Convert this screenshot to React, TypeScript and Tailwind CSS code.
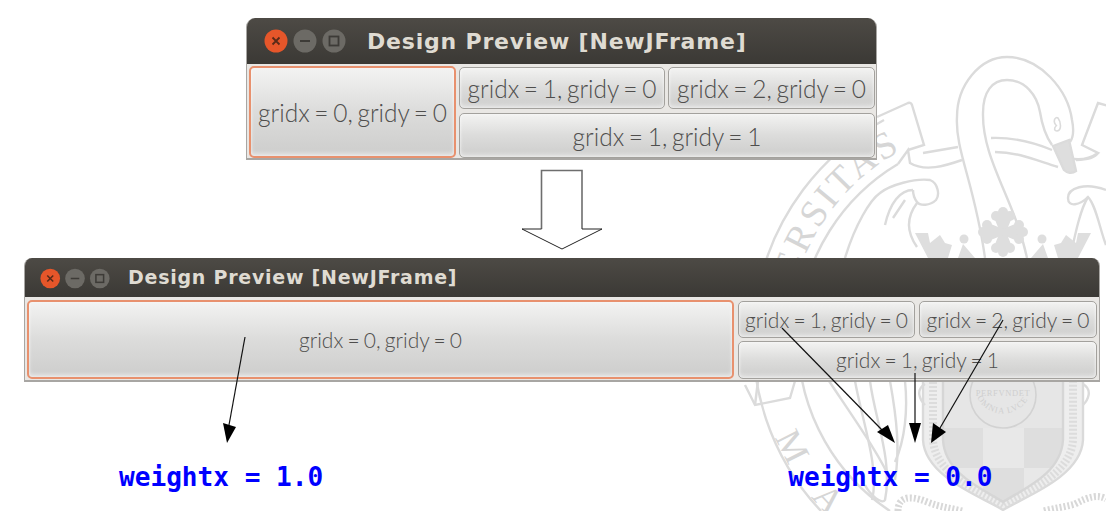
import React from "react";

const Btn = ({ label, big, active, cls }: { label: string; big?: boolean; active?: boolean; cls?: string }) => (
  <div
    className={`flex items-center justify-center bg-gradient-to-b from-[#f3f3f2] via-[#dcdcdb] to-[#cdcdcc] shadow-[inset_0_-3px_4px_rgba(255,255,255,0.45),inset_0_0_3px_rgba(255,255,255,0.6)] whitespace-nowrap font-light text-[#4f4e4d] [font-family:'Lato',sans-serif] ${
      big ? "text-[24.5px] [word-spacing:-2px] pt-[3px]" : "text-[21px] [word-spacing:-1.5px]"
    } ${active ? "border-2 border-[#e8916e] rounded-[5px]" : "border border-[#a3a19d] rounded-[5px]"} ${cls ?? ""}`}
  >
    {label}
  </div>
);

const Dots = ({ big }: { big?: boolean }) => (
  <svg className={big ? "w-[82px] h-[24px] shrink-0" : "w-[70px] h-[21px] shrink-0 mt-[2px]"} viewBox="0 0 82 24">
    <circle cx="12" cy="12" r="11.5" fill="#e6562a" />
    <path d="M8.5 8.5l7 7m0-7l-7 7" stroke="#5a2a18" strokeWidth="1.8" />
    <circle cx="41" cy="12" r="11.5" fill="#6c6a65" />
    <path d="M36 12h10" stroke="#3d3b37" strokeWidth="1.8" />
    <circle cx="70" cy="12" r="11.5" fill="#6c6a65" />
    <rect x="65.5" y="7.5" width="9" height="9" fill="none" stroke="#3d3b37" strokeWidth="1.8" />
  </svg>
);

const CrossArm = ({ angle }: { angle: number }) => (
  <g transform={`translate(1003 232) rotate(${angle})`}>
    <path d="M-3 0L-10 -17H10L3 0Z" />
    <circle cx="0" cy="-20" r="5" />
    <circle cx="-7" cy="-16" r="5" />
    <circle cx="7" cy="-16" r="5" />
  </g>
);

const Watermark = () => (
  <svg className="absolute inset-0" width="1106" height="511" viewBox="0 0 1106 511" fill="none" stroke="#dbdbdb" strokeWidth="2.4">
    <defs>
      <path id="topArc" d="M788 340A215 215 0 0 1 1003 125" />
      <path id="lowArc" d="M755 340A248 248 0 0 0 1003 588" />
      <path id="lvce" d="M975 392A29 29 0 0 0 1031 392" />
      <clipPath id="shieldClip">
        <path d="M943 378V440C945 475 985 490 1003 502C1021 490 1061 475 1063 440V378Z" />
      </clipPath>
    </defs>

    {/* rings */}
    <path d="M821 511A250 250 0 0 1 884 120" />
    <path d="M890 511A205 205 0 0 1 898 164" />

    {/* lettering */}
    <g stroke="none" fill="#d6d6d6" className="[font-family:'Liberation_Serif',serif]">
      <text fontSize="38" letterSpacing="3">
        <textPath href="#topArc" startOffset="31">VERSITAS</textPath>
      </text>
      <text fontSize="36">
        <textPath href="#lowArc" startOffset="100">M</textPath>
      </text>
      <text fontSize="36">
        <textPath href="#lowArc" startOffset="170">A</textPath>
      </text>
    </g>

    {/* ribbons */}
    <path d="M877 117L908 103Q911 102 912 105L924 145L908 150" />
    <path d="M898 164L908 150L910 163C925 172 945 166 962 160" />
    <path d="M923 153L958 147" />
    <path d="M1122 110L1098 103L1082 145L1098 153C1085 162 1070 160 1062 155" />
    <path d="M795 381L790 398L755 405L745 385" />
    <path d="M755 405L758 381" />

    {/* swan */}
    <path d="M957 117C957 85 980 57 1007 57C1040 57 1068 90 1072 120C1074 130 1073 138 1070 142" />
    <path d="M983 113C983 92 992 80 1007 80C1025 80 1037 95 1040 112C1042 125 1045 135 1052 145" />
    <path d="M957 117C955 150 975 185 985 258" />
    <path d="M983 113C982 160 1015 200 1027 258" />
    <path d="M991 138C1015 137 1035 143 1052 150" />
    <path d="M995 152C1020 152 1040 162 1058 167" />
    <path d="M1057 126C1052 122 1055 116 1058 118C1061 122 1062 130 1057 131C1054 131 1054 128 1056 126" strokeWidth="1.6" />
    <path d="M1053 146L1069 140L1076 171C1072 174 1067 173 1064 170Z" fill="#dedede" />
    <path d="M1076 160C1085 160 1095 158 1098 153" />

    {/* scrolls */}
    <path d="M845 258C855 225 870 200 880 193C890 185 915 178 930 180C938 183 940 195 936 200C930 206 920 206 917 202C914 198 913 195 913 190" />
    <path d="M913 190C900 190 890 203 885 225M905 200L893 218" />
    <path d="M917 203C908 215 905 230 917 247" />
    <path d="M1106 190C1085 182 1068 188 1068 198C1068 208 1080 205 1088 197C1096 205 1100 230 1106 245" />
    <path d="M1088 197C1080 210 1075 235 1070 258" />

    {/* crown */}
    <g stroke="none" fill="#dedede">
      <CrossArm angle={0} />
      <CrossArm angle={90} />
      <CrossArm angle={180} />
      <CrossArm angle={270} />
      <path d="M915 233L928 233L930 243L940 235L945 243L952 245L948 258H928Z" />
      <path d="M1091 233L1078 233L1076 243L1066 235L1061 243L1054 245L1058 258H1078Z" />
      <circle cx="964" cy="239" r="4.5" />
      <circle cx="1042" cy="239" r="4.5" />
      <path d="M958 258L963 244L975 258ZM1048 258L1043 244L1031 258Z" />
    </g>

    {/* feathers */}
    <path d="M829 381C855 420 880 455 893 485" />
    <path d="M855 381C862 420 880 470 872 500" />
    <path d="M870 381C875 420 893 460 885 500C882 505 870 495 865 485" />
    <path d="M890 381C897 420 900 450 895 480" />
    <path d="M905 381C908 410 905 440 895 462" />

    {/* shield */}
    <path d="M923 378V440C925 478 985 498 1003 510C1021 498 1081 478 1083 440V378Z" fill="#eeeeee" stroke="#dadada" />
    <g clipPath="url(#shieldClip)" stroke="none">
      <rect x="943" y="378" width="122" height="50" fill="#e6e6e6" />
      <rect x="943" y="428" width="40" height="40" fill="#dedede" />
      <rect x="983" y="428" width="41" height="40" fill="#e8e8e8" />
      <rect x="1024" y="428" width="41" height="40" fill="#dedede" />
      <rect x="943" y="468" width="40" height="40" fill="#e8e8e8" />
      <rect x="983" y="468" width="41" height="40" fill="#dedede" />
      <rect x="1024" y="468" width="41" height="40" fill="#e8e8e8" />
    </g>
    <path d="M933 378V440C935 476 985 494 1003 506C1021 494 1071 476 1073 440V378" strokeWidth="8" strokeDasharray="2 2" stroke="#dcdcdc" />
    <path d="M943 378V440C945 475 985 490 1003 502C1021 490 1061 475 1063 440V378" stroke="#d6d6d6" />
    <circle cx="1003" cy="395" r="33" stroke="#d2d2d2" strokeWidth="1.6" />
    <g stroke="none" fill="#cfcfcf" className="[font-family:'Liberation_Serif',serif]">
      <text x="1003" y="396" fontSize="8.5" letterSpacing="0.6" textAnchor="middle">PERFVNDET</text>
      <text fontSize="8.5" letterSpacing="1">
        <textPath href="#lvce" startOffset="6">OMNIA LVCE</textPath>
      </text>
    </g>
    <path d="M925 384C915 390 920 400 925 405M1083 384C1093 390 1088 400 1083 405" />

    {/* rope */}
    <path d="M898 511C898 498 908 494 927 502C940 507 950 508 962 511M1044 511C1055 508 1065 507 1075 504C1088 497 1098 494 1106 499" strokeWidth="7" strokeDasharray="2 2" stroke="#d8d8d8" />
  </svg>
);

export default function App() {
  return (
    <div className="relative w-[1106px] h-[511px] overflow-hidden bg-white">
      <Watermark />

      <div className="relative flex flex-col">
        {/* first window */}
        <div className="ml-[246px] mt-[18px] w-[631px] h-[142px] flex flex-col rounded-t-[9px] overflow-hidden border-b-2 border-x border-[#a8a6a3] bg-[#e9e7e4]">
          <div className="h-[46px] shrink-0 flex items-center pl-[17px] gap-[21px] bg-gradient-to-b from-[#4d4a45] to-[#3b3935]">
            <Dots big />
            <span className="text-[22px] font-bold tracking-[0.8px] text-[#dfdbd2] [font-family:'DejaVu_Sans',sans-serif] whitespace-nowrap">
              Design Preview [NewJFrame]
            </span>
          </div>
          <div className="flex-1 grid grid-cols-[207px_206px_207px] grid-rows-[42px_45px] gap-x-[3px] gap-y-[4px] pl-[2px] pt-[3px]">
            <Btn big active cls="row-span-2 -mt-[1px]" label="gridx = 0, gridy = 0" />
            <Btn big label="gridx = 1, gridy = 0" />
            <Btn big label="gridx = 2, gridy = 0" />
            <Btn big cls="col-span-2" label="gridx = 1, gridy = 1" />
          </div>
        </div>

        {/* big arrow */}
        <svg className="ml-[521px] mt-[9px] w-[82px] h-[81px]" viewBox="0 0 82 81" fill="none">
          <path d="M20.5 60V1.5H61V60" stroke="#6e6e6e" strokeWidth="1.6" />
          <path d="M20.5 60H1L41 80L81 60H61" stroke="#222" strokeWidth="1" />
        </svg>

        {/* second window */}
        <div className="ml-[24px] mt-[8px] w-[1076px] h-[124px] flex flex-col rounded-t-[8px] overflow-hidden border-b-2 border-x border-[#a8a6a3] bg-[#e9e7e4]">
          <div className="h-[39px] shrink-0 flex items-center pl-[15px] gap-[18px] bg-gradient-to-b from-[#4d4a45] to-[#3b3935]">
            <Dots />
            <span className="text-[19px] font-bold tracking-[0.75px] text-[#dfdbd2] [font-family:'DejaVu_Sans',sans-serif] whitespace-nowrap">
              Design Preview [NewJFrame]
            </span>
          </div>
          <div className="flex-1 grid grid-cols-[707px_177px_178px] grid-rows-[37px_38px] gap-x-[4px] gap-y-[3px] pl-[2px] pt-[4px]">
            <Btn active cls="row-span-2 -mt-[1px]" label="gridx = 0, gridy = 0" />
            <Btn label="gridx = 1, gridy = 0" />
            <Btn label="gridx = 2, gridy = 0" />
            <Btn cls="col-span-2" label="gridx = 1, gridy = 1" />
          </div>
        </div>

        {/* weights */}
        <div className="mt-[78px] ml-[119px] flex gap-[465px] text-[26.1px] leading-[34px] font-bold text-[#0000ff] [font-family:'DejaVu_Sans_Mono',monospace] whitespace-pre">
          <span>weightx = 1.0</span>
          <span>weightx = 0.0</span>
        </div>
      </div>

      {/* pointers drawn over the windows */}
      <svg className="absolute left-0 top-0 pointer-events-none" width="1106" height="511" viewBox="0 0 1106 511">
        <g stroke="#111" strokeWidth="1.2" fill="none">
          <path d="M245 337L229 425" />
          <path d="M782 328L882 430" />
          <path d="M915 373V425" />
          <path d="M1003 320L940 428" />
        </g>
        <g fill="#000">
          <path d="M227 443L223 423L236 427Z" />
          <path d="M895 443L877 432L888 425Z" />
          <path d="M915 443L909 423H921Z" />
          <path d="M931 443L933 423L946 432Z" />
        </g>
      </svg>
    </div>
  );
}
